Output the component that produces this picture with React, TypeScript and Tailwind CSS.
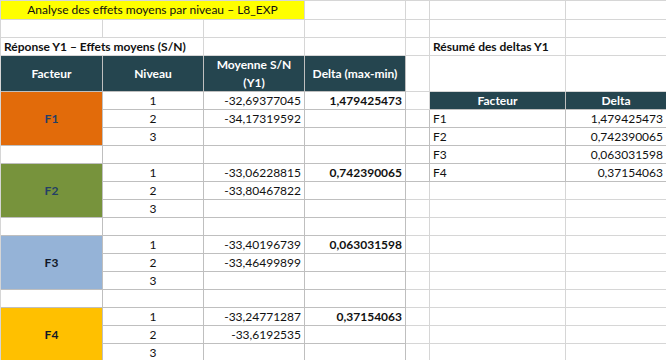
import React from 'react';

// feuille Excel : colonnes A-G, lignes de 18px
const GRID = 'border-[#d6d6d6]';
const TBL = 'border-[#bfbfbf]';

type CellProps = {
  children?: React.ReactNode;
  className?: string;
  tbl?: boolean;
};

const Cell: React.FC<CellProps> = ({ children, className = '', tbl = false }) => (
  <div
    className={`flex items-center overflow-hidden whitespace-nowrap border-r border-b px-[3px] ${tbl ? TBL : GRID} ${className}`}
  >
    {children}
  </div>
);

const Head: React.FC<{ children?: React.ReactNode; className?: string }> = ({ children, className = '' }) => (
  <Cell tbl className={`justify-center bg-[#25454f] font-bold text-white ${className}`}>
    {children}
  </Cell>
);

const blocks = [
  { name: 'F1', bg: 'bg-[#e26b0a]', fg: 'text-[#243f66]', vals: ['-32,69377045', '-34,17319592'], delta: '1,479425473' },
  { name: 'F2', bg: 'bg-[#77933c]', fg: 'text-[#243f66]', vals: ['-33,06228815', '-33,80467822'], delta: '0,742390065' },
  { name: 'F3', bg: 'bg-[#95b3d7]', fg: 'text-[#111827]', vals: ['-33,40196739', '-33,46499899'], delta: '0,063031598' },
  { name: 'F4', bg: 'bg-[#ffc000]', fg: 'text-[#111827]', vals: ['-33,24771287', '-33,6192535'], delta: '0,37154063' },
];

// résumé à droite : une ligne par rangée de la feuille à partir de la ligne 6
const summary = [
  ['F1', '1,479425473'],
  ['F2', '0,742390065'],
  ['F3', '0,063031598'],
  ['F4', '0,37154063'],
];

const rightSide = (row: number) => {
  // row = index of sheet row starting at 5 (the header of the summary table)
  if (row === 5) {
    return (
      <>
        <Cell />
        <Head>Facteur</Head>
        <Head>Delta</Head>
      </>
    );
  }
  const s = summary[row - 6];
  if (s) {
    return (
      <>
        <Cell tbl />
        <Cell tbl>{s[0]}</Cell>
        <Cell tbl className="justify-end">{s[1]}</Cell>
      </>
    );
  }
  return (
    <>
      <Cell />
      <Cell />
      <Cell />
    </>
  );
};

export default function App() {
  const rows: React.ReactNode[] = [];
  let r = 5;
  blocks.forEach((b, i) => {
    for (let k = 0; k < 3; k++) {
      rows.push(
        <React.Fragment key={`${b.name}-${k}`}>
          {k === 0 && (
            <Cell tbl className={`row-span-3 justify-center font-bold ${b.bg} ${b.fg}`}>
              {b.name}
            </Cell>
          )}
          <Cell tbl className="justify-center">{k + 1}</Cell>
          <Cell tbl className="justify-end">{b.vals[k] ?? ''}</Cell>
          <Cell tbl className="justify-end font-bold">{k === 0 ? b.delta : ''}</Cell>
          {rightSide(r)}
        </React.Fragment>
      );
      r++;
    }
    if (i < blocks.length - 1) {
      rows.push(
        <React.Fragment key={`gap-${i}`}>
          <Cell tbl />
          <Cell tbl />
          <Cell tbl />
          <Cell tbl />
          {rightSide(r)}
        </React.Fragment>
      );
      r++;
    }
  });

  return (
    <div className="h-[360px] w-[666px] overflow-hidden bg-white font-['Lato',sans-serif] text-[12px] text-[#111]">
      <div className={`grid grid-cols-[102px_101px_101px_101px_24px_136px_101px] grid-rows-[19px_18px_18px_36px_repeat(15,18px)] border-l border-t ${GRID}`}>
        {/* ligne 1 */}
        <Cell className="col-span-3 justify-center bg-[#ffff00]">Analyse des effets moyens par niveau – L8_EXP</Cell>
        <Cell />
        <Cell />
        <Cell />
        <Cell />

        {/* ligne 2 */}
        <Cell />
        <Cell />
        <Cell />
        <Cell />
        <Cell />
        <Cell />
        <Cell />

        {/* ligne 3 */}
        <Cell className="col-span-2 font-bold">Réponse Y1 – Effets moyens (S/N)</Cell>
        <Cell />
        <Cell />
        <Cell />
        <Cell className="font-bold">Résumé des deltas Y1</Cell>
        <Cell />

        {/* ligne 4 : en-têtes */}
        <Head>Facteur</Head>
        <Head>Niveau</Head>
        <Head className="flex-col leading-[18px]">
          <span>Moyenne S/N</span>
          <span>(Y1)</span>
        </Head>
        <Head>Delta (max-min)</Head>
        <Cell />
        <Cell />
        <Cell />

        {rows}
      </div>
    </div>
  );
}
